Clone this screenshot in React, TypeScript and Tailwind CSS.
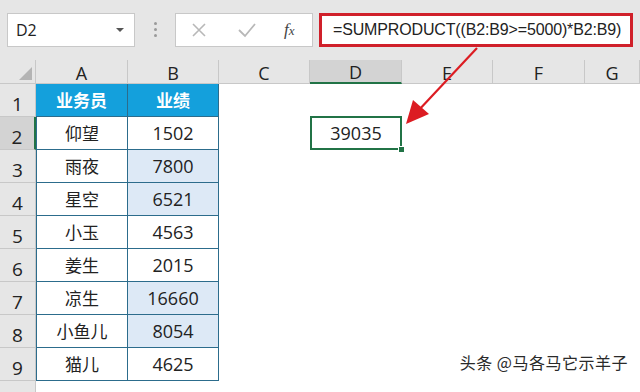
import React from "react";

const cjk = { fontFamily: '"Noto Sans CJK SC", "Noto Sans", sans-serif' };
const num = { fontFamily: '"Open Sans", "Noto Sans", sans-serif' };

const rows: [string, string, boolean][] = [
  ["仰望", "1502", false],
  ["雨夜", "7800", true],
  ["星空", "6521", true],
  ["小玉", "4563", false],
  ["姜生", "2015", false],
  ["凉生", "16660", true],
  ["小鱼儿", "8054", true],
  ["猫儿", "4625", false],
];

const cols = ["A", "B", "C", "D", "E", "F", "G"];

export default function App() {
  return (
    <div className="relative w-[640px] h-[392px] overflow-hidden bg-white text-[#222]" style={num}>
      {/* Top bar */}
      <div className="h-[60px] bg-[#e6e6e6] flex items-center pb-[1px]">
        <div className="ml-[7px] w-[128px] h-[34px] bg-white border border-[#c8c8c8] flex items-center justify-between pl-[8px] pr-[9px]">
          <span className="text-[16px] text-[#222]">D2</span>
          <svg width="10" height="6" viewBox="0 0 10 6"><path d="M1 1 L9 1 L5 5 Z" fill="#555" /></svg>
        </div>
        <div className="w-[40px] flex flex-col items-center gap-[3px]">
          <div className="w-[3px] h-[3px] rounded-full bg-[#9a9a9a]" />
          <div className="w-[3px] h-[3px] rounded-full bg-[#9a9a9a]" />
          <div className="w-[3px] h-[3px] rounded-full bg-[#9a9a9a]" />
        </div>
        <div className="w-[138px] h-[34px] bg-white border border-[#c8c8c8] flex items-center">
          <svg className="ml-[15px]" width="16" height="16" viewBox="0 0 16 16"><path d="M2 2 L14 14 M14 2 L2 14" stroke="#b8b8b8" strokeWidth="1.6" /></svg>
          <svg className="ml-[30px]" width="20" height="16" viewBox="0 0 20 16"><path d="M2 8 L8 14 L18 2" stroke="#b8b8b8" strokeWidth="1.8" fill="none" /></svg>
          <span className="ml-[27px] text-[17px] italic text-[#444]" style={{ fontFamily: '"Liberation Serif", serif' }}>f<span className="text-[13px]">x</span></span>
        </div>
        <div className="ml-[6px] w-[314px] h-[34px] bg-white border-[3px] border-[#d0202a] flex items-center pl-[11px]">
          <span className="text-[#222] whitespace-nowrap" style={{ fontFamily: '"Liberation Sans", Arial, sans-serif', fontSize: "16px", letterSpacing: "-0.15px" }}>=SUMPRODUCT((B2:B9&gt;=5000)*B2:B9)</span>
        </div>
      </div>

      {/* Grid */}
      <div className="grid grid-cols-[36px_92px_91px_91px_92px_91px_92px_1fr] grid-rows-[24px_repeat(9,33px)_1fr] h-[332px]">
        {/* Corner */}
        <div className="bg-[#e6e6e6] border-r border-b border-[#c8c8c8] flex items-end justify-end p-[3px]">
          <svg width="13" height="13" viewBox="0 0 13 13"><path d="M13 0 L13 13 L0 13 Z" fill="#b4b4b4" /></svg>
        </div>
        {cols.map((c) => (
          <div
            key={c}
            className={
              c === "D"
                ? "bg-[#d3d3d3] border-r border-[#c8c8c8] border-b-2 border-b-[#217346] flex items-center justify-center text-[18px] text-[#222] leading-none pt-[2px]"
                : "bg-[#e6e6e6] border-r border-b border-[#c8c8c8] flex items-center justify-center text-[18px] text-[#222] leading-none pt-[2px]"
            }
          >
            {c}
          </div>
        ))}

        {/* Row 1 */}
        <div className="bg-[#e6e6e6] border-r border-b border-[#c8c8c8] flex items-end justify-center pb-[2px] text-[19px] leading-none">1</div>
        <div className="bg-[#14a0dc] border-r border-b border-[#2c6c8c] text-white text-[17px] font-bold flex items-center justify-center" style={cjk}>业务员</div>
        <div className="bg-[#14a0dc] border-r border-b border-[#2c6c8c] text-white text-[17px] font-bold flex items-center justify-center" style={cjk}>业绩</div>
        <div /><div /><div /><div /><div />

        {rows.map(([name, val, hi], i) => {
          const r = i + 2;
          return (
            <React.Fragment key={r}>
              <div
                className={
                  r === 2
                    ? "bg-[#d3d3d3] border-r-2 border-r-[#217346] border-b border-[#c8c8c8] flex items-end justify-center pb-[2px] text-[19px] leading-none"
                    : "bg-[#e6e6e6] border-r border-b border-[#c8c8c8] flex items-end justify-center pb-[2px] text-[19px] leading-none"
                }
              >
                {r}
              </div>
              <div className="bg-white border-l border-r border-b border-[#2c6c8c] flex items-center justify-center text-[17px] text-[#222]" style={cjk}>{name}</div>
              <div className={(hi ? "bg-[#dde9f6] " : "bg-white ") + "border-r border-b border-[#2c6c8c] flex items-center justify-center text-[18px] text-[#222]"}>{val}</div>
              <div />
              {r === 2 ? (
                <div className="relative border-2 border-[#217346] flex items-center justify-center text-[18px] text-[#222] -mt-[1px]">
                  39035
                  <div className="absolute right-[-5px] bottom-[-5px] w-[7px] h-[7px] bg-[#217346] border border-white" />
                </div>
              ) : (
                <div />
              )}
              <div /><div /><div />
            </React.Fragment>
          );
        })}

        <div className="bg-[#e6e6e6] border-r border-[#c8c8c8]" />
        <div /><div /><div /><div /><div /><div /><div />
      </div>

      {/* Arrow */}
      <svg className="absolute left-0 top-0 pointer-events-none" width="640" height="392" viewBox="0 0 640 392">
        <path d="M477 48 L417 112" stroke="#dc1c22" strokeWidth="2.2" />
        <polygon points="406,124 413,100 429,114" fill="#dc1c22" />
      </svg>

      {/* Watermark */}
      <div
        className="absolute right-[12px] bottom-[18px] text-[16px] tracking-[0.5px] text-[#2a2a2a] whitespace-nowrap"
        style={{ ...cjk, textShadow: "0 0 2px #fff, 0 0 2px #fff" }}
      >
        头条 @马各马它示羊子
      </div>
    </div>
  );
}
